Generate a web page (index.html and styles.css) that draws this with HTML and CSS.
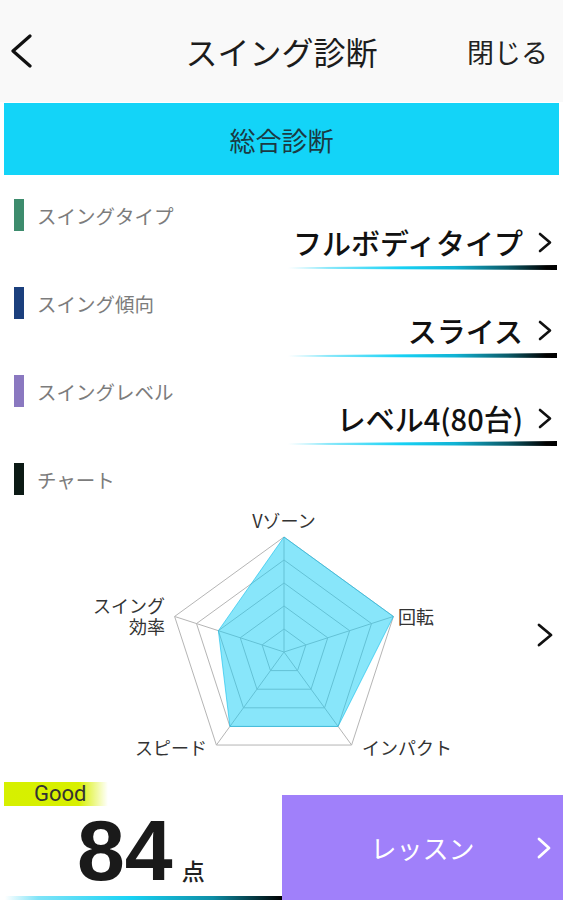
FILE: index.html
```html
<!DOCTYPE html>
<html lang="ja">
<head>
<meta charset="utf-8">
<title>スイング診断</title>
<link rel="stylesheet" href="styles.css">
</head>
<body>
<div class="page">
  <header class="topbar">
    <span class="back">
      <svg width="24" height="34" viewBox="0 0 24 34"><polyline points="20,2 3,17 20,32" fill="none" stroke="#111" stroke-width="3.2" stroke-linecap="round" stroke-linejoin="round"/></svg>
    </span>
    <h1 class="title">スイング診断</h1>
    <span class="close">閉じる</span>
  </header>

  <div class="tab">総合診断</div>

  <section class="items">
    <div class="item">
      <div class="item-label"><span class="marker marker-green"></span><span>スイングタイプ</span></div>
      <div class="item-value"><span>フルボディタイプ</span><svg class="chev" width="16" height="22" viewBox="0 0 16 22"><polyline points="3,3 13,11.5 3,20" fill="none" stroke="#111" stroke-width="2.6" stroke-linecap="round" stroke-linejoin="round"/></svg></div>
      <div class="grad-line"></div>
    </div>
    <div class="item">
      <div class="item-label"><span class="marker marker-navy"></span><span>スイング傾向</span></div>
      <div class="item-value"><span>スライス</span><svg class="chev" width="16" height="22" viewBox="0 0 16 22"><polyline points="3,3 13,11.5 3,20" fill="none" stroke="#111" stroke-width="2.6" stroke-linecap="round" stroke-linejoin="round"/></svg></div>
      <div class="grad-line"></div>
    </div>
    <div class="item">
      <div class="item-label"><span class="marker marker-purple"></span><span>スイングレベル</span></div>
      <div class="item-value"><span>レベル4(80台)</span><svg class="chev" width="16" height="22" viewBox="0 0 16 22"><polyline points="3,3 13,11.5 3,20" fill="none" stroke="#111" stroke-width="2.6" stroke-linecap="round" stroke-linejoin="round"/></svg></div>
      <div class="grad-line"></div>
    </div>
    <div class="item item-chart">
      <div class="item-label"><span class="marker marker-black"></span><span>チャート</span></div>
    </div>
  </section>

  <div class="chart">
    <svg width="563" height="270" viewBox="0 0 563 270">
      <g fill="none" stroke="#b5b5b5" stroke-width="1">
        <polygon points="284,32 393.38,111.46 351.6,240.04 216.4,240.04 174.62,111.46"/>
        <polygon points="284,55 371.5,118.57 338.08,221.43 229.92,221.43 196.5,118.57"/>
        <polygon points="284,78 349.63,125.68 324.56,202.82 243.44,202.82 218.37,125.68"/>
        <polygon points="284,101 327.75,132.79 311.04,184.21 256.96,184.21 240.25,132.79"/>
        <polygon points="284,124 305.88,139.89 297.52,165.61 270.48,165.61 262.12,139.89"/>
        <line x1="284" y1="147" x2="284" y2="32"/>
        <line x1="284" y1="147" x2="393.38" y2="111.46"/>
        <line x1="284" y1="147" x2="351.6" y2="240.04"/>
        <line x1="284" y1="147" x2="216.4" y2="240.04"/>
        <line x1="284" y1="147" x2="174.62" y2="111.46"/>
      </g>
      <polygon points="284,32 393.38,111.46 338.08,221.43 229.92,221.43 218.37,125.68" fill="rgba(17,206,245,0.5)" stroke="rgba(17,190,235,0.6)" stroke-width="1"/>
      <g class="chart-label">
        <text x="284" y="22.5" text-anchor="middle">Vゾーン</text>
        <text x="398" y="118.5">回転</text>
        <text x="165" y="108" text-anchor="end">スイング</text>
        <text x="165" y="129" text-anchor="end">効率</text>
        <text x="207" y="249.5" text-anchor="end">スピード</text>
        <text x="362" y="249.5">インパクト</text>
      </g>
      <polyline points="539,120 551,130 539,140" fill="none" stroke="#111" stroke-width="2.8" stroke-linecap="round" stroke-linejoin="round"/>
    </svg>
  </div>

  <footer class="bottom">
    <div class="score-col">
      <div class="badge">Good</div>
      <div class="score"><span class="num">84</span><span class="unit">点</span></div>
      <div class="score-line"></div>
    </div>
    <div class="lesson">
      <span class="lesson-text">レッスン</span>
      <svg class="lesson-chev" width="16" height="24" viewBox="0 0 16 24"><polyline points="3,3 13,12 3,21" fill="none" stroke="#fff" stroke-width="2.8" stroke-linecap="round" stroke-linejoin="round"/></svg>
    </div>
  </footer>
</div>
</body>
</html>
```

FILE: styles.css
```css
body {
  margin: 0;
  background: #ffffff;
  font-family: "Noto Sans CJK JP", "Noto Sans", sans-serif;
}

.page {
  width: 563px;
}

.topbar {
  height: 102px;
  background: #f9f9f9;
  display: grid;
  grid-template-columns: 1fr auto 1fr;
  align-items: center;
}

.back {
  display: flex;
  padding-left: 10px;
}

.title {
  margin: 0;
  font-size: 32px;
  font-weight: 400;
  line-height: 1;
  color: #1c1c1c;
}

.close {
  justify-self: end;
  padding-right: 15px;
  font-size: 27px;
  color: #222;
}

.tab {
  margin: 1px 4px 0;
  height: 72px;
  background: #13d4f8;
  display: flex;
  align-items: center;
  justify-content: center;
  font-size: 26px;
  color: #1b3a42;
}

.items {
  padding-top: 24px;
}

.item {
  margin-bottom: 17px;
}

.item-chart {
  margin-bottom: 10px;
}

.item-label {
  display: flex;
  align-items: center;
  gap: 13px;
  height: 32px;
  padding-left: 14px;
  font-size: 19.5px;
  color: #7c7c7c;
}

.marker {
  width: 10px;
  height: 32px;
}

.marker-green { background: #3d8c6d; }
.marker-navy { background: #1b3f7d; }
.marker-purple { background: #8a78c0; }
.marker-black { background: #0c1a15; }

.item-value {
  margin-top: -6px;
  height: 34px;
  display: flex;
  align-items: center;
  justify-content: flex-end;
  gap: 14px;
  padding-right: 10px;
  font-size: 29px;
  font-weight: 500;
  line-height: 34px;
  color: #111;
}

.chev {
  display: block;
}

.grad-line {
  margin: 6px 6px 0 auto;
  width: 269px;
  height: 5px;
  background: linear-gradient(to right, rgba(255,255,255,0) 0%, #8ae8fa 15%, #17d2f5 42%, #11b3d4 62%, #0b5a68 82%, #000 96%);
  clip-path: polygon(0 45%, 100% 0, 100% 100%, 0 75%);
}

.chart svg {
  display: block;
}

.chart-label {
  font-family: "Noto Sans CJK JP", "Noto Sans", sans-serif;
  font-size: 18px;
  fill: #333;
}

.bottom {
  margin-top: 7px;
  display: flex;
  align-items: flex-end;
}

.score-col {
  width: 282px;
}

.badge {
  margin-left: 4px;
  width: 104px;
  height: 24px;
  box-sizing: border-box;
  padding-left: 30px;
  background: linear-gradient(to right, #d6f000 0%, #d8f000 72%, rgba(240,255,200,0) 100%);
  font-family: Roboto, "Liberation Sans", sans-serif;
  font-size: 22px;
  line-height: 24px;
  color: #333;
}

.score {
  height: 88px;
  padding-left: 77px;
  line-height: 88px;
  white-space: nowrap;
}

.num {
  font-family: "Liberation Sans", Arial, sans-serif;
  font-weight: 700;
  font-size: 86px;
  color: #1a1a1a;
}

.unit {
  margin-left: 9px;
  font-size: 23px;
  font-weight: 500;
  line-height: 1;
  color: #222;
}

.score-line {
  margin-left: 5px;
  height: 6px;
  background: linear-gradient(to right, rgba(255,255,255,0) 0%, #7fe4f8 12%, #19d3f5 45%, #0e8ea6 75%, #000 100%);
  background-size: 100% 4px;
  background-position: 0 2px;
  background-repeat: no-repeat;
}

.lesson {
  flex: 1;
  height: 105px;
  background: #a080fa;
  display: grid;
  grid-template-columns: 1fr auto 1fr;
  align-items: center;
}

.lesson-text {
  grid-column: 2;
  font-size: 26px;
  color: #fff;
}

.lesson-chev {
  grid-column: 3;
  justify-self: end;
  margin-right: 11px;
  display: block;
}
```
